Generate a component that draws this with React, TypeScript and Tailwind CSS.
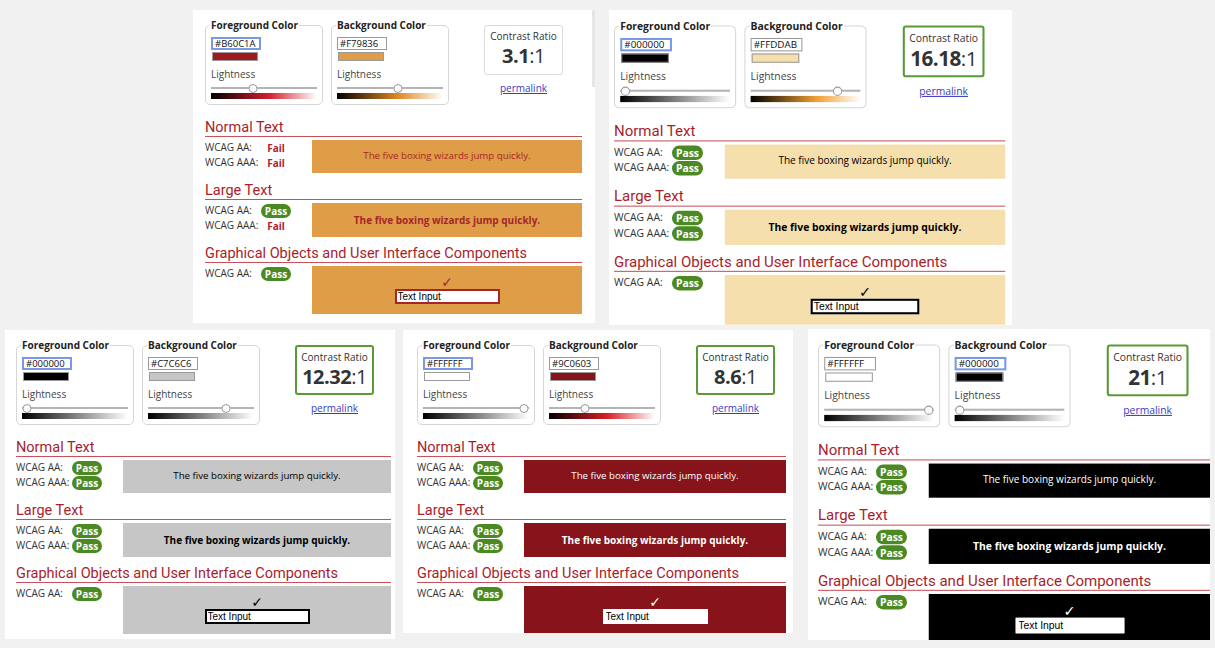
import React from "react";

type Status = "pass" | "fail";

type Picker = {
  label: string;
  hex: string;
  swatch: string;
  gradient: string;
  thumb: string;
  focused?: boolean;
};

type Panel = {
  frame: string;
  content: string;
  fg: Picker;
  bg: Picker;
  ratio: string;
  good: boolean;
  sample: string;
  check: string;
  field: string;
  normal: [Status, Status];
  large: [Status, Status];
  ui: Status;
  edge?: boolean;
};

const GRAY = "bg-[linear-gradient(to_right,#000,#fff)]";

const panels: Panel[] = [
  {
    frame: "left-[193px] top-[10px] w-[402px] h-[313px]",
    content: "ml-[12px] w-[377px]",
    fg: {
      label: "Foreground Color",
      hex: "#B60C1A",
      swatch: "bg-[#9e1a22]",
      gradient: "bg-[linear-gradient(to_right,#000,#d4202e_55%,#fff)]",
      thumb: "left-[39%]",
      focused: true,
    },
    bg: {
      label: "Background Color",
      hex: "#F79836",
      swatch: "bg-[#df9d47]",
      gradient: "bg-[linear-gradient(to_right,#000,#e08a26_58%,#fff)]",
      thumb: "left-[58%]",
    },
    ratio: "3.1",
    good: false,
    sample: "bg-[#df9d47] text-[#a5262a]",
    check: "text-[#a5262a]",
    field: "border-[#a5262a]",
    normal: ["fail", "fail"],
    large: ["pass", "fail"],
    ui: "pass",
    edge: true,
  },
  {
    frame: "left-[609px] top-[10px] w-[403px] h-[315px]",
    content: "ml-[5px] w-[378px] origin-top-left scale-[1.035]",
    fg: {
      label: "Foreground Color",
      hex: "#000000",
      swatch: "bg-black",
      gradient: GRAY,
      thumb: "left-[0%]",
      focused: true,
    },
    bg: {
      label: "Background Color",
      hex: "#FFDDAB",
      swatch: "bg-[#f4dfad]",
      gradient: "bg-[linear-gradient(to_right,#000,#eea032_60%,#fff)]",
      thumb: "left-[82%]",
    },
    ratio: "16.18",
    good: true,
    sample: "bg-[#f4dfad] text-black",
    check: "text-black",
    field: "border-black",
    normal: ["pass", "pass"],
    large: ["pass", "pass"],
    ui: "pass",
  },
  {
    frame: "left-[5px] top-[330px] w-[390px] h-[309px]",
    content: "ml-[11px] w-[375px]",
    fg: {
      label: "Foreground Color",
      hex: "#000000",
      swatch: "bg-black",
      gradient: GRAY,
      thumb: "left-[0%]",
      focused: true,
    },
    bg: {
      label: "Background Color",
      hex: "#C7C6C6",
      swatch: "bg-[#c6c6c6]",
      gradient: GRAY,
      thumb: "left-[76%]",
    },
    ratio: "12.32",
    good: true,
    sample: "bg-[#c6c6c6] text-black",
    check: "text-black",
    field: "border-black",
    normal: ["pass", "pass"],
    large: ["pass", "pass"],
    ui: "pass",
  },
  {
    frame: "left-[403px] top-[330px] w-[390px] h-[303px]",
    content: "ml-[14px] w-[369px]",
    fg: {
      label: "Foreground Color",
      hex: "#FFFFFF",
      swatch: "bg-white",
      gradient: GRAY,
      thumb: "left-[100%]",
      focused: true,
    },
    bg: {
      label: "Background Color",
      hex: "#9C0603",
      swatch: "bg-[#86141a]",
      gradient: "bg-[linear-gradient(to_right,#000,#d82024_55%,#fff)]",
      thumb: "left-[32%]",
    },
    ratio: "8.6",
    good: true,
    sample: "bg-[#86141a] text-white",
    check: "text-white",
    field: "border-white",
    normal: ["pass", "pass"],
    large: ["pass", "pass"],
    ui: "pass",
  },
  {
    frame: "left-[808px] top-[329px] w-[402px] h-[311px]",
    content: "ml-[10px] w-[379px] origin-top-left scale-[1.035]",
    fg: {
      label: "Foreground Color",
      hex: "#FFFFFF",
      swatch: "bg-white",
      gradient: GRAY,
      thumb: "left-[100%]",
    },
    bg: {
      label: "Background Color",
      hex: "#000000",
      swatch: "bg-black",
      gradient: GRAY,
      thumb: "left-[0%]",
      focused: true,
    },
    ratio: "21",
    good: true,
    sample: "bg-black text-white",
    check: "text-white",
    field: "border-white",
    normal: ["pass", "pass"],
    large: ["pass", "pass"],
    ui: "pass",
  },
];

const ColorPicker = ({ p, className = "" }: { p: Picker; className?: string }) => (
  <fieldset className={`w-[118px] min-w-0 rounded-[5px] border border-[#d6d6d6] px-[5px] pb-[5px] ${className}`}>
    <legend className="-ml-[1px] px-[1px] text-[10px] font-bold leading-[12px] text-[#222]">{p.label}</legend>
    <input
      readOnly
      value={p.hex}
      className={`mt-[6px] block h-[13px] w-[50px] bg-white pl-[2px] text-[9.5px] leading-[9px] text-[#111] outline-none ${
        p.focused ? "border-2 border-[#7a98e8]" : "border border-[#9a9a9a]"
      }`}
    />
    <div className={`ml-[1px] mt-[2px] h-[9px] w-[46px] border border-[#9a9a9a] ${p.swatch}`} />
    <div className="mt-[7px] text-[10px] leading-[12px] text-[#444]">Lightness</div>
    <div className="relative mt-[3px] h-[10px]">
      <div className="absolute inset-x-0 top-[4px] h-[2px] bg-[#b4b4b4]" />
      <div className="relative mx-[5px] h-full">
        <span
          className={`absolute top-[0.5px] h-[9px] w-[9px] -translate-x-1/2 rounded-full border border-[#9a9a9a] bg-[#fafafa] ${p.thumb}`}
        />
      </div>
    </div>
    <div className={`h-[6px] ${p.gradient}`} />
  </fieldset>
);

const Badge = ({ s }: { s: Status }) =>
  s === "pass" ? (
    <span className="inline-flex h-[14px] w-[30px] items-center justify-center rounded-full bg-[#4b8a23] text-[10px] font-bold leading-none text-white">
      Pass
    </span>
  ) : (
    <span className="inline-flex h-[14px] w-[30px] items-center justify-center text-[10px] font-bold leading-none text-[#b1202b]">
      Fail
    </span>
  );

const Results = ({ rows }: { rows: [string, Status][] }) => (
  <div className="w-[107px] shrink-0 text-[10px] leading-[15px] text-[#333]">
    {rows.map(([label, s]) => (
      <div key={label} className="flex items-center">
        <span className="w-[56px]">{label}</span>
        <Badge s={s} />
      </div>
    ))}
  </div>
);

const Heading = ({ children, className = "" }: { children: React.ReactNode; className?: string }) => (
  <h2
    className={`border-b border-[#c8505a] font-['Roboto',sans-serif] text-[14.5px] leading-[16px] text-[#a81e2c] ${className}`}
  >
    {children}
  </h2>
);

const Checker = ({ p }: { p: Panel }) => (
  <div className={`absolute overflow-hidden bg-white ${p.frame}`}>
    {p.edge && <div className="absolute right-0 top-0 h-[77px] w-[3px] bg-[#e6e6e6]" />}
    <div className={p.content}>
      <div className="flex items-start pt-[9px]">
        <ColorPicker p={p.fg} />
        <ColorPicker p={p.bg} className="ml-[8px]" />
        <div className="ml-[35px] mt-[6px] flex w-[79px] flex-col items-center">
          <div
            className={`flex h-[50px] w-full flex-col items-center rounded-[3px] bg-white ${
              p.good ? "border-2 border-[#5a9a34]" : "border border-[#dcdcdc]"
            }`}
          >
            <div className="mt-[4px] text-[10px] leading-[12px] text-[#333]">Contrast Ratio</div>
            <div className="mt-[2px] text-[20px] leading-[24px] tracking-[-0.5px] text-[#333]">
              <span className="font-bold">{p.ratio}</span>:1
            </div>
          </div>
          <a className="mt-[7px] text-[10px] leading-[12px] text-[#3b3bbf] underline">permalink</a>
        </div>
      </div>

      <Heading className="mt-[15px]">Normal Text</Heading>
      <div className="mt-[3px] flex">
        <Results rows={[["WCAG AA:", p.normal[0]], ["WCAG AAA:", p.normal[1]]]} />
        <div className={`flex h-[33px] flex-1 items-center justify-center text-[9.7px] ${p.sample}`}>
          The five boxing wizards jump quickly.
        </div>
      </div>

      <Heading className="mt-[10px]">Large Text</Heading>
      <div className="mt-[3px] flex">
        <Results rows={[["WCAG AA:", p.large[0]], ["WCAG AAA:", p.large[1]]]} />
        <div className={`flex h-[34px] flex-1 items-center justify-center text-[10px] font-bold ${p.sample}`}>
          The five boxing wizards jump quickly.
        </div>
      </div>

      <Heading className="mt-[9px]">Graphical Objects and User Interface Components</Heading>
      <div className="mt-[3px] flex">
        <Results rows={[["WCAG AA:", p.ui]]} />
        <div className={`flex h-[48px] flex-1 flex-col items-center ${p.sample}`}>
          <span className={`mt-[9px] font-['DejaVu_Sans',sans-serif] text-[14px] font-bold leading-[14px] ${p.check}`}>✓</span>
          <input
            readOnly
            value="Text Input"
            className={`h-[15px] w-[105px] border-2 bg-white px-[1px] font-['Liberation_Sans',Arial,sans-serif] text-[10px] leading-[11px] text-black outline-none ${p.field}`}
          />
        </div>
      </div>
    </div>
  </div>
);

export default function App() {
  return (
    <div className="relative h-[648px] w-[1215px] overflow-hidden bg-[#f1f1f1] font-['Open_Sans',sans-serif]">
      {panels.map((p, i) => (
        <Checker key={i} p={p} />
      ))}
    </div>
  );
}
